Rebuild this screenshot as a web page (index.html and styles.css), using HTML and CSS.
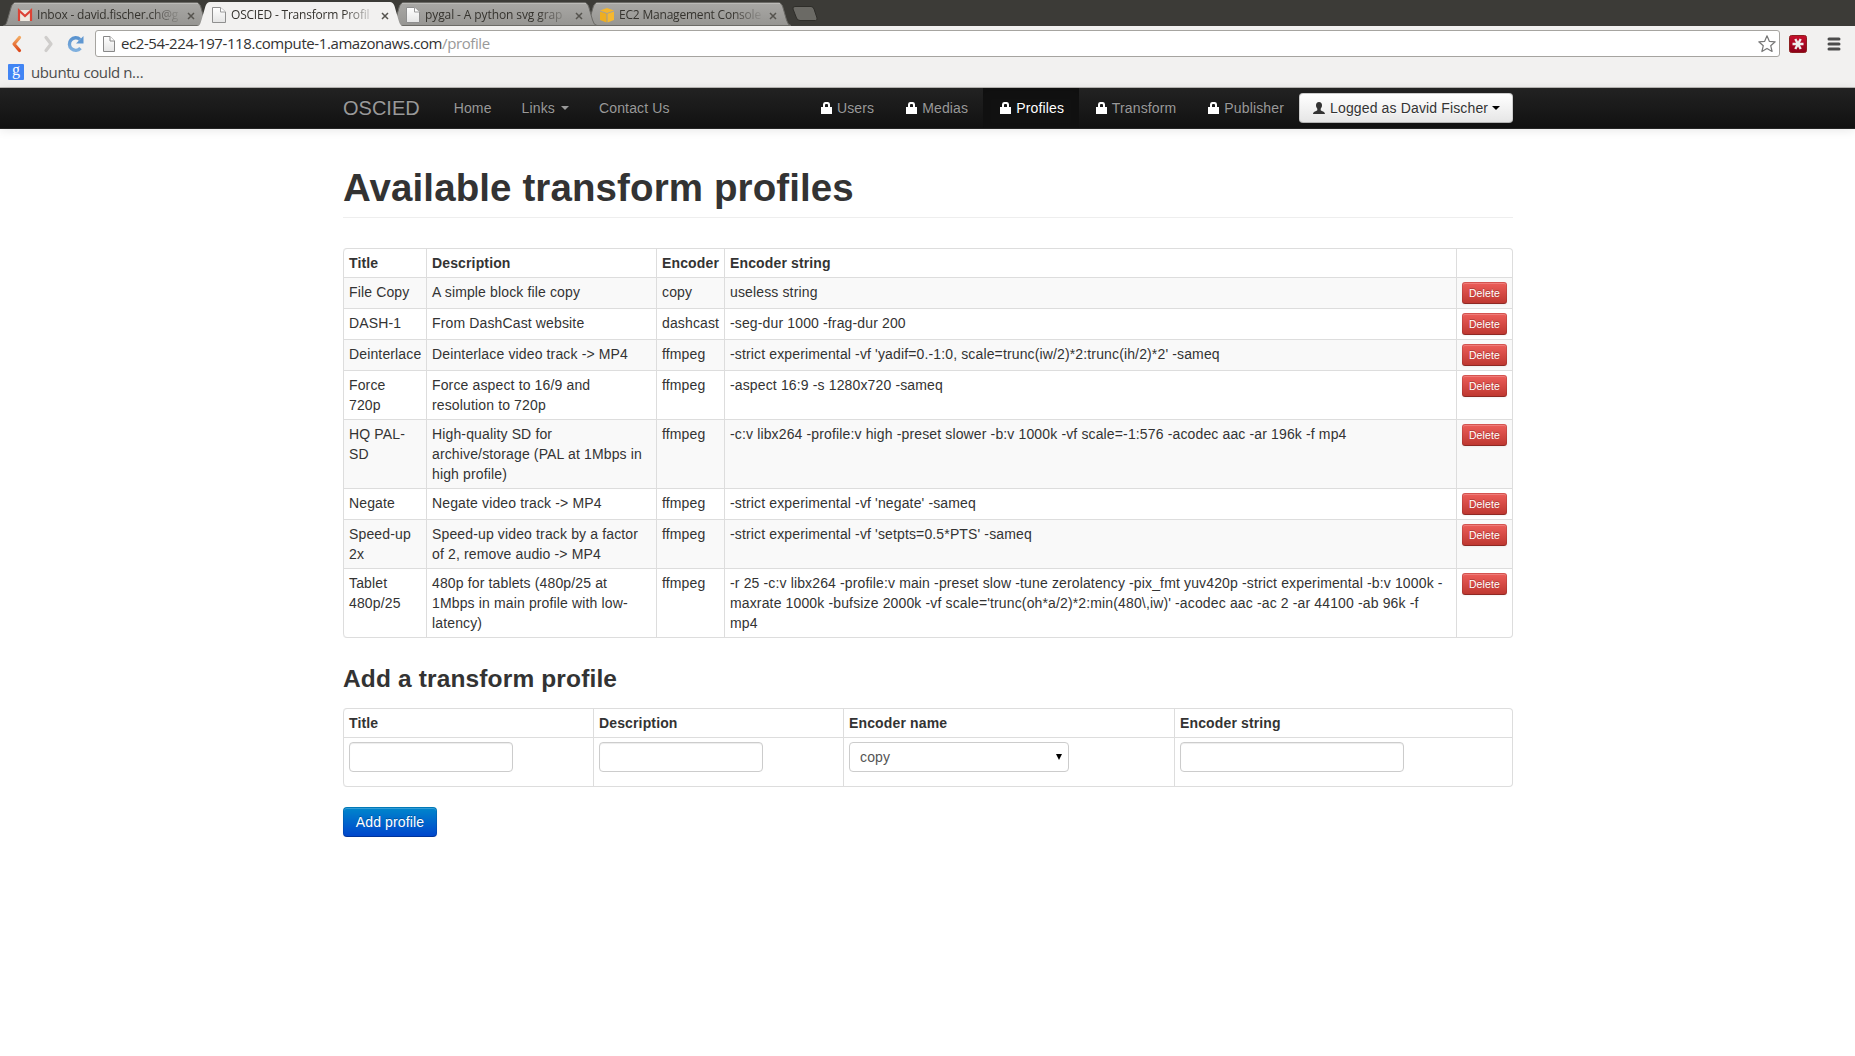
FILE: index.html
```html
<!DOCTYPE html>
<html lang="en">
<head>
<meta charset="utf-8">
<title>OSCIED - Transform Profiles</title>
<link rel="stylesheet" href="styles.css">
</head>
<body>
<svg class="defs" width="0" height="0">
  <defs>
    <linearGradient id="g-idle" x1="0" y1="0" x2="0" y2="1"><stop offset="0" stop-color="#a9a8a5"/><stop offset="1" stop-color="#969592"/></linearGradient>
    <linearGradient id="g-back" x1="0" y1="0" x2="0" y2="1"><stop offset="0" stop-color="#f3a860"/><stop offset="1" stop-color="#dd4a1c"/></linearGradient>
    <linearGradient id="g-reload" x1="0" y1="0" x2="0" y2="1"><stop offset="0" stop-color="#5a93cf"/><stop offset="1" stop-color="#80b0de"/></linearGradient>
    <linearGradient id="g-page" x1="0" y1="0" x2="0" y2="1"><stop offset="0" stop-color="#fff"/><stop offset="1" stop-color="#e4e4e4"/></linearGradient>
    <linearGradient id="g-red" x1="0" y1="0" x2="0" y2="1"><stop offset="0" stop-color="#c8102e"/><stop offset="1" stop-color="#8c0018"/></linearGradient>
    <symbol id="tab-idle" viewBox="0 0 206 24"><path d="M0.5 23.500C3 23.500 3.500 21 4.500 18L8.500 4Q10 .5 13 .5H193Q196 .5 197.500 4L201.500 18Q203 23.500 206 23.500Z" fill="url(#g-idle)" stroke="#6b6a66"/><path d="M11 1.500H195" stroke="#bbbab7"/></symbol>
    <symbol id="tab-live" viewBox="0 0 206 24"><path d="M0 24C3 24 3.500 21 4.500 18L8.500 4Q10 0 13 0H193Q196 0 197.500 4L201.500 18Q203 24 206 24Z" fill="#f2f1f0"/></symbol>
    <symbol id="i-page" viewBox="0 0 16 16"><path d="M1.500 .5H9.500L14.500 5V15.500H1.500Z" fill="url(#g-page)" stroke="#8f8f8f"/><path d="M9.500 .5V5H14.500" fill="#fff" stroke="#999"/></symbol>
    <symbol id="i-close" viewBox="0 0 8 8"><path d="M1 1L7 7M7 1L1 7" stroke="#55534e" stroke-width="1.500"/></symbol>
    <symbol id="i-lock" viewBox="0 0 14 14"><path d="M2 6H4V3.500Q4 1 6 1H9Q11 1 11 3.500V6H13V13H2ZM6 6H9V4Q9 3 8 3H7Q6 3 6 4Z" fill="#fff" fill-rule="evenodd"/></symbol>
  </defs>
</svg>

<div class="tabstrip">
  <div class="tab t1">
    <svg class="shape"><use href="#tab-idle"/></svg>
    <svg class="fav" viewBox="0 0 16 16"><path d="M1 3H15V14H1Z" fill="#eee9e0"/><path d="M2 14V3.500L8 9L14 3.500V14" fill="none" stroke="#dc4335" stroke-width="2.200"/></svg>
    <span class="label">Inbox - david.fischer.ch@g</span>
    <svg class="close"><use href="#i-close"/></svg>
  </div>
  <div class="tab t2">
    <svg class="shape"><use href="#tab-live"/></svg>
    <svg class="fav"><use href="#i-page"/></svg>
    <span class="label">OSCIED - Transform Profil</span>
    <svg class="close"><use href="#i-close"/></svg>
  </div>
  <div class="tab t3">
    <svg class="shape"><use href="#tab-idle"/></svg>
    <svg class="fav"><use href="#i-page"/></svg>
    <span class="label roomy">pygal - A python svg grap</span>
    <svg class="close"><use href="#i-close"/></svg>
  </div>
  <div class="tab t4">
    <svg class="shape"><use href="#tab-idle"/></svg>
    <svg class="fav" viewBox="0 0 16 16"><path d="M1 3.500L8 1L15 3.500L8 6Z" fill="#f5b52b"/><path d="M1 4.500L7.500 6.800V15.500L1 13Z" fill="#eeae22"/><path d="M15 4.500L8.500 6.800V15.500L15 13Z" fill="#f6b82f"/></svg>
    <span class="label">EC2 Management Console</span>
    <svg class="close"><use href="#i-close"/></svg>
  </div>
  <svg class="newtab" viewBox="0 0 26 16"><path d="M3 .5H19Q21 .5 22 3L25 12Q25.500 14.500 23.500 14.500H8Q5.500 14.500 4.500 12L1 3Q.5 .5 3 .5Z" fill="#6b6a65" stroke="#2e2d29"/></svg>
</div>

<div class="toolbar">
  <svg class="back" viewBox="0 0 12 18"><path d="M8.500 2.500L3 9L8.500 15.500" fill="none" stroke="url(#g-back)" stroke-width="3.200" stroke-linecap="round" stroke-linejoin="round"/></svg>
  <svg class="forward" viewBox="0 0 12 18"><path d="M3 2.500L8 9L3 15.500" fill="none" stroke="#cfcdcb" stroke-width="3.200" stroke-linecap="round" stroke-linejoin="round"/></svg>
  <svg class="reload" viewBox="0 0 18 18"><path d="M13.500 13.200A6.300 6.300 0 1 1 13 4.500" fill="none" stroke="url(#g-reload)" stroke-width="3.400"/><path d="M16.500 1V8.500H9Z" fill="#5f97d1"/></svg>
  <div class="omnibox">
    <svg class="pageicon" viewBox="0 0 12 16"><path d="M.5 .5H7L11.500 5V15.500H.5Z" fill="url(#g-page)" stroke="#888"/><path d="M7 .5V5H11.500" fill="#fff" stroke="#888"/></svg>
    <span class="url">ec2-54-224-197-118.compute-1.amazonaws.com<span class="path">/profile</span></span>
    <svg class="star" viewBox="0 0 20 20"><path d="M10 1.800L12.300 7.300L18.200 7.800L13.700 11.700L15.100 17.500L10 14.400L4.900 17.500L6.300 11.700L1.800 7.800L7.700 7.300Z" fill="#fff" stroke="#777" stroke-width="1.200" stroke-linejoin="round"/></svg>
  </div>
  <svg class="ext" viewBox="0 0 18 18"><rect x=".5" y=".5" width="17" height="17" rx="2" fill="url(#g-red)" stroke="#8d2020"/><path d="M3.500 9H14.500M6.300 4L11.700 14M11.700 4L6.300 14" stroke="#eee" stroke-width="2.400"/></svg>
  <svg class="burger" viewBox="0 0 14 14"><path d="M2 2H12M2 7H12M2 12H12" stroke="#4c4c4c" stroke-width="3" stroke-linecap="round"/></svg>
</div>
<div class="bookmarks">
  <span class="gicon">g</span><span class="bm">ubuntu could n…</span>
</div>

<nav class="navbar">
  <div class="container bar">
    <a class="brand">OSCIED</a>
    <a class="item">Home</a>
    <a class="item">Links <b class="caret"></b></a>
    <a class="item">Contact Us</a>
    <span class="spacer"></span>
    <a class="item"><svg class="ico"><use href="#i-lock"/></svg> Users</a>
    <a class="item"><svg class="ico"><use href="#i-lock"/></svg> Medias</a>
    <a class="item active"><svg class="ico"><use href="#i-lock"/></svg> Profiles</a>
    <a class="item"><svg class="ico"><use href="#i-lock"/></svg> Transform</a>
    <a class="item"><svg class="ico"><use href="#i-lock"/></svg> Publisher</a>
    <button class="btn user"><svg class="ico" viewBox="0 0 14 14"><path d="M7 1C9 1 10 2.300 10 4.300C10 6 9.300 7 8.700 7.800V9.200C9.500 10.200 13 10.300 13 13H1C1 10.300 4.500 10.200 5.300 9.200V7.800C4.700 7 4 6 4 4.300C4 2.300 5 1 7 1Z" fill="#333"/></svg> Logged as David Fischer <b class="caret"></b></button>
  </div>
</nav>

<main class="container">
  <header class="page-header"><h1>Available transform profiles</h1></header>
  <table class="table striped profiles">
    <colgroup><col class="c-title"><col class="c-desc"><col class="c-enc"><col class="c-str"><col class="c-act"></colgroup>
    <thead><tr><th>Title</th><th>Description</th><th>Encoder</th><th>Encoder string</th><th></th></tr></thead>
    <tbody>
      <tr><td>File Copy</td><td>A simple block file copy</td><td>copy</td><td>useless string</td><td><button class="btn danger">Delete</button></td></tr>
      <tr><td>DASH-1</td><td>From DashCast website</td><td>dashcast</td><td>-seg-dur 1000 -frag-dur 200</td><td><button class="btn danger">Delete</button></td></tr>
      <tr><td>Deinterlace</td><td>Deinterlace video track -&gt; MP4</td><td>ffmpeg</td><td>-strict experimental -vf 'yadif=0.-1:0, scale=trunc(iw/2)*2:trunc(ih/2)*2' -sameq</td><td><button class="btn danger">Delete</button></td></tr>
      <tr><td>Force<br>720p</td><td>Force aspect to 16/9 and<br>resolution to 720p</td><td>ffmpeg</td><td>-aspect 16:9 -s 1280x720 -sameq</td><td><button class="btn danger">Delete</button></td></tr>
      <tr><td>HQ PAL-<br>SD</td><td>High-quality SD for<br>archive/storage (PAL at 1Mbps in<br>high profile)</td><td>ffmpeg</td><td>-c:v libx264 -profile:v high -preset slower -b:v 1000k -vf scale=-1:576 -acodec aac -ar 196k -f mp4</td><td><button class="btn danger">Delete</button></td></tr>
      <tr><td>Negate</td><td>Negate video track -&gt; MP4</td><td>ffmpeg</td><td>-strict experimental -vf 'negate' -sameq</td><td><button class="btn danger">Delete</button></td></tr>
      <tr><td>Speed-up<br>2x</td><td>Speed-up video track by a factor<br>of 2, remove audio -&gt; MP4</td><td>ffmpeg</td><td>-strict experimental -vf 'setpts=0.5*PTS' -sameq</td><td><button class="btn danger">Delete</button></td></tr>
      <tr><td>Tablet<br>480p/25</td><td>480p for tablets (480p/25 at<br>1Mbps in main profile with low-<br>latency)</td><td>ffmpeg</td><td>-r 25 -c:v libx264 -profile:v main -preset slow -tune zerolatency -pix_fmt yuv420p -strict experimental -b:v 1000k -<br>maxrate 1000k -bufsize 2000k -vf scale='trunc(oh*a/2)*2:min(480\,iw)' -acodec aac -ac 2 -ar 44100 -ab 96k -f<br>mp4</td><td><button class="btn danger">Delete</button></td></tr>
    </tbody>
  </table>

  <h3>Add a transform profile</h3>
  <table class="table">
    <colgroup><col class="f-title"><col class="f-desc"><col class="f-name"><col class="f-str"></colgroup>
    <thead><tr><th>Title</th><th>Description</th><th>Encoder name</th><th>Encoder string</th></tr></thead>
    <tbody><tr>
      <td><input class="field" type="text"></td>
      <td><input class="field" type="text"></td>
      <td><div class="field select"><span>copy</span><svg width="6" height="6" viewBox="0 0 6 6"><path d="M0 0H6L3 6Z"/></svg></div></td>
      <td><input class="field wide" type="text"></td>
    </tr></tbody>
  </table>
  <button class="btn primary">Add profile</button>
</main>
</body>
</html>
```
FILE: styles.css
```css
* { box-sizing: border-box; }
body { margin: 0; background: #fff; color: #333; font: 14px/20px "Liberation Sans", Arial, sans-serif; overflow: hidden; }
svg { display: block; flex: none; }
.defs { position: absolute; }

/* Browser tabs */
.tabstrip { display: flex; height: 26px; padding: 2px 0 0 3px; background: #3c3b37; font: 12px/20px "Open Sans", "Noto Sans", sans-serif; }
.tab { position: relative; display: flex; align-items: center; width: 206px; height: 24px; padding: 2px 14px 0 14px; margin-right: -12px; color: #35332e; }
.t1 { z-index: 3; }
.t2 { z-index: 4; }
.t3 { z-index: 2; }
.t4 { z-index: 1; }
.shape { position: absolute; left: 0; top: 0; width: 206px; height: 24px; }
.fav { position: relative; width: 16px; height: 16px; }
.label { position: relative; width: 142px; margin-left: 4px; white-space: nowrap; letter-spacing: -0.2px; -webkit-mask-image: linear-gradient(90deg, #000 112px, transparent 146px); mask-image: linear-gradient(90deg, #000 112px, transparent 146px); }
.roomy { letter-spacing: -0.1px; }
.close { position: relative; width: 8px; height: 8px; margin: 1px 0 0 8px; }
.newtab { width: 26px; height: 16px; margin: 4px 0 0 13px; }

/* Toolbar */
.toolbar { display: flex; align-items: center; height: 35px; padding: 0 14px 0 11px; background: #f2f1f0; }
.back { width: 12px; height: 18px; }
.forward { width: 12px; height: 18px; margin-left: 20px; }
.reload { width: 18px; height: 18px; margin-left: 12px; }
.omnibox { display: flex; align-items: center; flex: 1; height: 27px; margin-left: 10px; padding: 0 2px 0 7px; background: #fff; border: 1px solid #a6a4a0; border-radius: 3px; }
.pageicon { width: 12px; height: 16px; }
.url { flex: 1; margin-left: 6px; padding-bottom: 2px; font: 15px/22px "Open Sans", "Noto Sans", sans-serif; color: #333; letter-spacing: -0.41px; white-space: nowrap; }
.path { color: #999; }
.star { width: 20px; height: 20px; }
.ext { width: 18px; height: 18px; margin-left: 9px; }
.burger { width: 14px; height: 14px; margin-left: 20px; }
.bookmarks { display: flex; align-items: center; height: 27px; padding: 0 0 4px 8px; background: #f2f1f0; border-bottom: 1px solid #bab8b5; font: 15px/22px "Open Sans", "Noto Sans", sans-serif; color: #4c4c4c; }
.gicon { width: 16px; height: 16px; background: #4285f4; border-radius: 1px; color: #fff; font: 16px/12px "Liberation Serif", serif; text-align: center; }
.bm { margin-left: 7px; letter-spacing: -0.4px; }

/* Site navigation */
.container { width: 1170px; margin-left: 343px; letter-spacing: 0.14px; }
.navbar { height: 41px; background: linear-gradient(#222, #111); border-bottom: 1px solid #252525; box-shadow: 0 1px 10px rgba(0, 0, 0, .1); }
.bar { display: flex; height: 40px; }
.brand { padding: 10px 19px 10px 0; font-size: 20px; letter-spacing: 0; color: #999; text-shadow: 0 -1px 0 rgba(0, 0, 0, .25); }
.item { padding: 10px 15px; color: #999; text-shadow: 0 -1px 0 rgba(0, 0, 0, .25); white-space: nowrap; }
.active { background: #111; color: #fff; box-shadow: inset 0 3px 8px rgba(0, 0, 0, .125); }
.spacer { flex: 1; }
.ico { display: inline-block; width: 14px; height: 14px; vertical-align: text-top; margin-top: 1px; }
.caret { display: inline-block; vertical-align: top; margin: 8px 0 0 2px; border: 4px solid transparent; border-top-color: #999; border-bottom: 0; }

.btn { display: inline-block; padding: 4px 12px; margin: 0; border: 1px solid #bbb; border-radius: 4px; font: 14px/20px "Liberation Sans", Arial, sans-serif; letter-spacing: 0.14px; white-space: nowrap; box-shadow: inset 0 1px 0 rgba(255, 255, 255, .2), 0 1px 2px rgba(0, 0, 0, .05); }
.user { width: 214px; height: 30px; margin-top: 5px; color: #333; background: linear-gradient(#fff, #e6e6e6); border-color: #ccc #ccc #b3b3b3; text-shadow: 0 1px 1px rgba(255, 255, 255, .75); }
.user .caret { margin-left: 0; border-top-color: #000; }
.danger { display: block; width: 45px; height: 22px; padding: 0; border-radius: 3px; color: #fff; font-size: 10.5px; background: linear-gradient(#ee5f5b, #bd362f); border-color: rgba(0, 0, 0, .1) rgba(0, 0, 0, .1) rgba(0, 0, 0, .25); background-origin: border-box; text-shadow: 0 -1px 0 rgba(0, 0, 0, .25); }
.primary { display: block; width: 94px; height: 30px; padding: 4px 0; color: #fff; background: linear-gradient(#08c, #04c); background-origin: border-box; border-color: rgba(0, 0, 0, .1) rgba(0, 0, 0, .1) rgba(0, 0, 0, .25); text-shadow: 0 -1px 0 rgba(0, 0, 0, .25); }

/* Content */
.page-header { margin: 39px 0 30px; padding-bottom: 9px; border-bottom: 1px solid #eee; }
h1 { margin: 0; font-size: 38.5px; line-height: 40px; letter-spacing: 0.11px; }
h3 { margin: 0 0 9px; padding-top: 1px; font-size: 24.5px; line-height: 40px; }
.table { width: 1170px; margin-bottom: 20px; table-layout: fixed; border: 1px solid #ddd; border-left: 0; border-collapse: separate; border-spacing: 0; border-radius: 4px; }
.table th, .table td { padding: 4px 5px; border-left: 1px solid #ddd; text-align: left; vertical-align: top; white-space: nowrap; }
.table td { border-top: 1px solid #ddd; }
.table th:first-child { border-top-left-radius: 4px; }
.table tr:last-child td:first-child { border-bottom-left-radius: 4px; }
.striped tbody tr:nth-child(odd) td { background: #f9f9f9; }
.c-title { width: 83px; }
.c-desc { width: 230px; }
.c-enc { width: 68px; }
.c-str { width: 732px; }
.c-act { width: 56px; }
.f-title, .f-desc { width: 250px; }
.f-name { width: 331px; }
.f-str { width: 338px; }
.field { display: block; width: 164px; height: 30px; margin: 0 0 10px; padding: 4px 6px; background: #fff; border: 1px solid #ccc; border-radius: 4px; box-shadow: inset 0 1px 1px rgba(0, 0, 0, .075); }
.wide { width: 224px; }
.select { display: flex; align-items: center; justify-content: space-between; width: 220px; padding: 0 6px 0 10px; color: #555; box-shadow: none; }
.select path { fill: #000; }
```
